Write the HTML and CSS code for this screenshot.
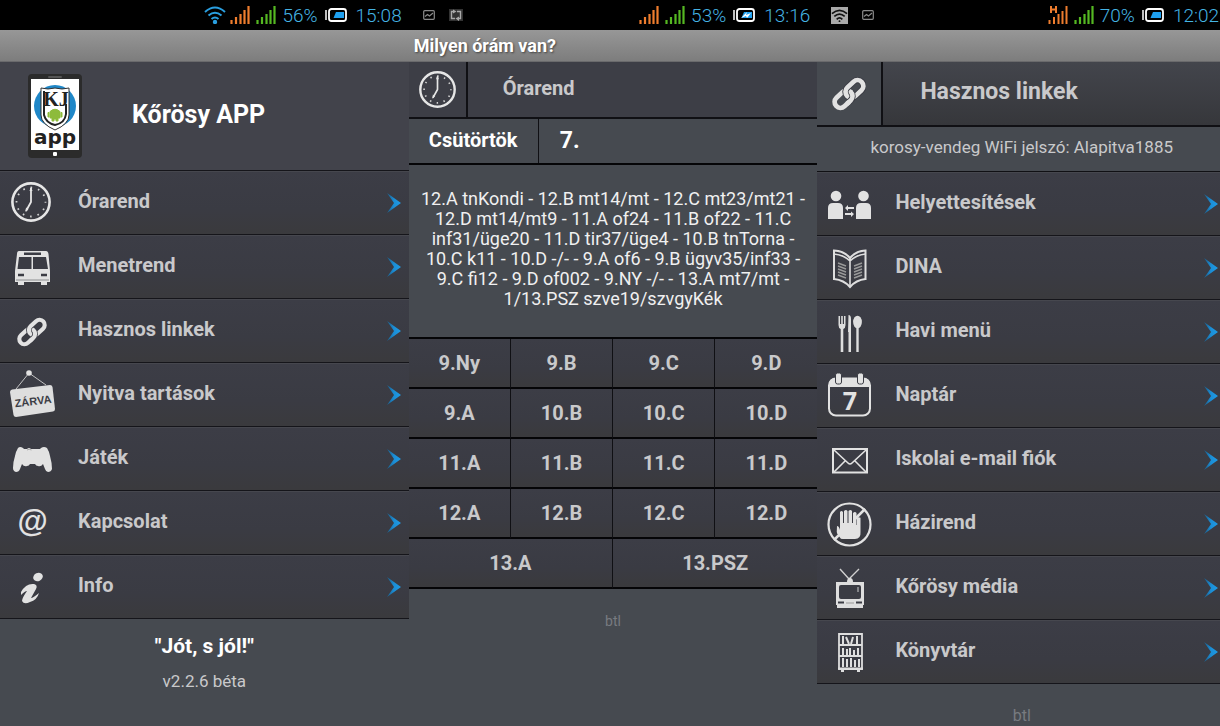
FILE: index.html
```html
<!DOCTYPE html>
<html lang="hu">
<head>
    <meta charset="UTF-8">
    <meta name="viewport" content="width=device-width, initial-scale=1.0">
    <title>Kőrösy APP</title>
    <link rel="stylesheet" href="styles.css">
</head>
<body>
<svg class="sprite" aria-hidden="true">
    <defs>
        <linearGradient id="blue" x1="0" x2="1" y1="0" y2="0">
            <stop offset="0" stop-color="#1c5c88"/>
            <stop offset="0.5" stop-color="#1b8ed6"/>
            <stop offset="1" stop-color="#1f9be6"/>
        </linearGradient>
    </defs>
    <symbol id="arrow" viewBox="0 0 14 20">
        <path d="M0 0L14 10L0 20L7 10Z" fill="url(#blue)"/>
    </symbol>
    <symbol id="signal" viewBox="0 0 20 18">
        <path d="M1.500 18V14M6 18V11M10.500 18V8M14.500 18V4M18.500 18V0" stroke="currentColor" stroke-width="2.200"/>
    </symbol>
    <symbol id="battery" viewBox="0 0 22 14">
        <path d="M1 2V12" stroke="#fff" stroke-width="1.500"/>
        <rect x="4" y="1" width="17" height="12" rx="2.500" fill="none" stroke="#fff" stroke-width="1.800"/>
        <path d="M11 4H19V10H8.500Z" fill="#1ea0f0"/>
    </symbol>
    <symbol id="picture" viewBox="0 0 12 10">
        <rect x="0.700" y="0.700" width="10.600" height="8.600" rx="1" fill="none" stroke="#8a8a8a" stroke-width="1.200"/>
        <path d="M2 6.500L4.500 4.500L6.500 6L10 3" fill="none" stroke="#8a8a8a" stroke-width="1.200"/>
    </symbol>
    <symbol id="clock" viewBox="0 0 40 40">
        <circle cx="20" cy="20" r="18.600" fill="none" stroke="#e6e6e6" stroke-width="2.600"/>
        <circle cx="20" cy="20" r="14.500" fill="none" stroke="#d4d4d4" stroke-width="1.800" stroke-dasharray="1.600 5.990" stroke-dashoffset="0.800"/>
        <path d="M20 6V20L15 29" fill="none" stroke="#e6e6e6" stroke-width="1.800" stroke-linejoin="round"/>
        <path d="M20 4.500L21.500 9H18.500ZM14.500 30L15 25.500L17.500 27Z" fill="#e6e6e6"/>
    </symbol>
    <symbol id="chain" viewBox="-16 -16 32 32">
        <g transform="rotate(-43)" fill="none">
            <rect x="-16.500" y="-5.500" width="19" height="11" rx="5.500" stroke="#e2e2e2" stroke-width="4.400"/>
            <rect x="-2.500" y="-5.500" width="19" height="11" rx="5.500" stroke="#3a3b43" stroke-width="6"/>
            <rect x="-2.500" y="-5.500" width="19" height="11" rx="5.500" stroke="#e2e2e2" stroke-width="4.400"/>
            <path d="M-5 5.500H-3A5.500 5.500 0 0 0 2.500 0" stroke="#3a3b43" stroke-width="6"/>
            <path d="M-8 5.500H-3A5.500 5.500 0 0 0 2.500 -0.500" stroke="#e2e2e2" stroke-width="4.400"/>
        </g>
    </symbol>
</svg>

<main class="screens">
    <!-- main menu -->
    <section class="screen">
        <div class="status-bar">
            <svg class="wifi" viewBox="0 0 22 18" fill="none" stroke="#2a9fe0" stroke-width="2">
                <path d="M1 6Q11 -3 21 6M4.500 9.500Q11 4 17.500 9.500M7.500 13Q11 10 14.500 13"/>
                <circle cx="11" cy="16" r="1.200" fill="#2a9fe0"/>
            </svg>
            <svg class="signal orange"><use href="#signal"/></svg>
            <svg class="signal green"><use href="#signal"/></svg>
            <span class="percent">56%</span>
            <svg class="battery"><use href="#battery"/></svg>
            <span class="time">15:08</span>
        </div>
        <div class="title-bar"></div>
        <header class="app-header">
            <svg class="logo" viewBox="0 0 54 84">
                <rect width="54" height="84" rx="4" fill="#2b2b2b"/>
                <rect x="20" y="2" width="14" height="2" rx="1" fill="#555"/>
                <rect x="3" y="5" width="48" height="71" fill="#fff"/>
                <circle cx="27" cy="32" r="21" fill="#1f87c8"/>
                <path d="M13 14Q20 16 27 14Q34 16 41 14V41Q41 50 27 56Q13 50 13 41Z" fill="#fff" stroke="#333" stroke-width="1"/>
                <path d="M38 30V40Q37 49 27 51Q18 49 16 41V17" fill="none" stroke="#222" stroke-width="2"/>
                <text x="28" y="32" class="logo-letters">KJ</text>
                <path d="M22 37.500Q27 33 32 37.500V44H30V47H28V45H26V47H24V44H22ZM20 38.500H21V43H20ZM33 38.500H34V43H33Z" fill="#8dbb3b" stroke="#8dbb3b"/>
                <text x="27" y="70" class="logo-app">app</text>
                <rect x="25" y="78" width="4" height="4" rx="1" fill="#fff"/>
            </svg>
            <h1>Kőrösy APP</h1>
        </header>
        <nav class="menu">
            <a href="#orarend">
                <svg class="icon" viewBox="0 0 64 64"><use href="#clock" x="11" y="11" width="40" height="40"/></svg>
                <span>Órarend</span>
                <svg class="arrow"><use href="#arrow"/></svg>
            </a>
            <a href="#menetrend">
                <svg class="icon" viewBox="0 0 64 64">
                    <path d="M19 16H46Q48 16 48.500 19L50 36V47H47V50H41V47H24V50H18V47H15V36L17 19Q17 16 19 16Z" fill="#e2e2e2"/>
                    <path d="M24 17.500H41V20H24ZM19 22H31.500V34H17.500ZM33 22H46L48 34H33Z" fill="#3b3c44"/>
                    <path d="M18 40H24M41 40H47" stroke="#3b3c44" stroke-width="2.500"/>
                    <path d="M16 45H49" stroke="#77787c" stroke-width="0.800"/>
                </svg>
                <span>Menetrend</span>
                <svg class="arrow"><use href="#arrow"/></svg>
            </a>
            <a href="#linkek">
                <svg class="icon" viewBox="0 0 64 64"><use href="#chain" x="17" y="18" width="30" height="30"/></svg>
                <span>Hasznos linkek</span>
                <svg class="arrow"><use href="#arrow"/></svg>
            </a>
            <a href="#nyitva">
                <svg class="icon" viewBox="0 0 64 64">
                    <path d="M16 26L29 10L46 22" fill="none" stroke="#c4c4c4"/>
                    <circle cx="29" cy="10" r="2.800" fill="#e2e2e2"/>
                    <path d="M12 26.500L50 22Q52 22 52.500 24L55 46Q55 48 53 48.500L16 54Q14 54 13.500 52L10 29Q10 27 12 26.500Z" fill="#dedede"/>
                    <text x="33" y="42" transform="rotate(-7 33 38)" class="sign-text">ZÁRVA</text>
                </svg>
                <span>Nyitva tartások</span>
                <svg class="arrow"><use href="#arrow"/></svg>
            </a>
            <a href="#jatek">
                <svg class="icon" viewBox="0 0 64 64">
                    <path d="M18 21Q20 19 23 21L24 22H27Q29 20 31 22H40L41 21Q44 19 47 21Q49 24 50 29Q52 36 52 42Q51 45 48 45Q46 45 45 42L43 37Q41 40 38 39Q36 39 35 37H30Q29 39 27 39Q24 40 22 37L20 42Q19 45 16 45Q13 44 13 41Q13 35 15 29Q16 24 18 21Z" fill="#e2e2e2"/>
                    <path d="M27 23Q29 21.500 31.500 23" fill="none" stroke="#999" stroke-width="0.800"/>
                </svg>
                <span>Játék</span>
                <svg class="arrow"><use href="#arrow"/></svg>
            </a>
            <a href="#kapcsolat">
                <svg class="icon" viewBox="0 0 64 64"><text x="32" y="41" class="at-sign">@</text></svg>
                <span>Kapcsolat</span>
                <svg class="arrow"><use href="#arrow"/></svg>
            </a>
            <a href="#info">
                <svg class="icon" viewBox="0 0 64 64" fill="#e2e2e2">
                    <ellipse cx="38" cy="22" rx="5" ry="4" transform="rotate(-25 38 22)"/>
                    <path d="M21 37Q26 28 34 29Q38 30 36 34L31 43Q33 43 39 38Q37 45 30 47Q24 50 22 46Q22 43 27 36Q25 36 21 40Z"/>
                </svg>
                <span>Info</span>
                <svg class="arrow"><use href="#arrow"/></svg>
            </a>
        </nav>
        <footer class="app-footer">
            <strong>"Jót, s jól!"</strong>
            <span>v2.2.6 béta</span>
        </footer>
    </section>

    <!-- timetable -->
    <section class="screen">
        <div class="status-bar">
            <div class="notifications">
                <svg class="picture"><use href="#picture"/></svg>
                <svg class="download" viewBox="0 0 14 13">
                    <rect x="0" y="0" width="14" height="12" fill="#333"/>
                    <path d="M4 2.500H2.500V9.500H6M8 2.500H11.500V9.500H10" fill="none" stroke="#aaa" stroke-width="1.400"/>
                    <path d="M4 0.500L7.500 2.500L4 4.500ZM10 7.500L6.500 9.500L10 12Z" fill="#aaa"/>
                </svg>
            </div>
            <svg class="signal orange"><use href="#signal"/></svg>
            <svg class="signal green"><use href="#signal"/></svg>
            <span class="percent">53%</span>
            <svg class="battery" viewBox="0 0 22 14">
                <use href="#battery"/>
                <path d="M8 10L14 4L13 7L18 5L14 10L13 8Z" fill="#fff"/>
            </svg>
            <span class="time">13:16</span>
        </div>
        <div class="title-bar">Milyen órám van?</div>
        <header class="page-header timetable-header">
            <div class="header-icon"><svg class="clock"><use href="#clock"/></svg></div>
            <h2>Órarend</h2>
        </header>
        <div class="day-row">
            <div class="day">Csütörtök</div>
            <div class="lesson">7.</div>
        </div>
        <p class="lessons">12.A tnKondi - 12.B mt14/mt - 12.C mt23/mt21 -<br>
            12.D mt14/mt9 - 11.A of24 - 11.B of22 - 11.C<br>
            inf31/üge20 - 11.D tir37/üge4 - 10.B tnTorna -<br>
            10.C k11 - 10.D -/- - 9.A of6 - 9.B ügyv35/inf33 -<br>
            9.C fi12 - 9.D of002 - 9.NY -/- - 13.A mt7/mt -<br>
            1/13.PSZ szve19/szvgyKék</p>
        <div class="classes">
            <button type="button">9.Ny</button>
            <button type="button">9.B</button>
            <button type="button">9.C</button>
            <button type="button">9.D</button>
            <button type="button">9.A</button>
            <button type="button">10.B</button>
            <button type="button">10.C</button>
            <button type="button">10.D</button>
            <button type="button">11.A</button>
            <button type="button">11.B</button>
            <button type="button">11.C</button>
            <button type="button">11.D</button>
            <button type="button">12.A</button>
            <button type="button">12.B</button>
            <button type="button">12.C</button>
            <button type="button">12.D</button>
            <button type="button" class="wide">13.A</button>
            <button type="button" class="wide">13.PSZ</button>
        </div>
        <footer class="credit">btl</footer>
    </section>

    <!-- useful links -->
    <section class="screen">
        <div class="status-bar">
            <div class="notifications">
                <svg class="wifi-box" viewBox="0 0 18 18" fill="none" stroke="#111" stroke-width="1.800">
                    <rect width="18" height="18" fill="#a9a9a9" stroke="none"/>
                    <path d="M1 7Q9 0 17 7M3.500 10Q9 5 14.500 10M6 13Q9 10 12 13"/>
                    <circle cx="9" cy="15" r="1" fill="#111" stroke="none"/>
                </svg>
                <svg class="picture"><use href="#picture"/></svg>
            </div>
            <svg class="signal orange" viewBox="0 0 20 18">
                <path d="M1.500 18V14M6 18V11M10.500 18V8M14.500 18V5M18.500 18V0M3 0V7M8 0V7M3 3.500H8" stroke="currentColor" stroke-width="2"/>
            </svg>
            <svg class="signal green"><use href="#signal"/></svg>
            <span class="percent">70%</span>
            <svg class="battery"><use href="#battery"/></svg>
            <span class="time">12:02</span>
        </div>
        <div class="title-bar"></div>
        <header class="page-header links-header">
            <div class="header-icon"><svg class="chain"><use href="#chain"/></svg></div>
            <h2>Hasznos linkek</h2>
        </header>
        <p class="wifi-note">korosy-vendeg WiFi jelszó: Alapitva1885</p>
        <nav class="menu">
            <a href="#helyettesites">
                <svg class="icon" viewBox="0 0 64 64" fill="#e2e2e2">
                    <circle cx="19" cy="24" r="5.300"/>
                    <path d="M11 47V36Q11 31 16 31H21Q26 31 26 36V47Z"/>
                    <circle cx="46.500" cy="24" r="5.300"/>
                    <path d="M39 47V36Q39 31 44 31H49Q54 31 54 36V47Z"/>
                    <path d="M28 36L31 33V35H37V37H31V39ZM37 42L34 39.500V41H28V43H34V45Z"/>
                </svg>
                <span>Helyettesítések</span>
                <svg class="arrow"><use href="#arrow"/></svg>
            </a>
            <a href="#dina">
                <svg class="icon" viewBox="0 0 64 64" fill="none" stroke="#dedede">
                    <path d="M17 14.500Q27 15 33 22Q39 15 48.500 14.500V43Q39 44 33 51Q27 44 17 43Z" stroke-width="2"/>
                    <path d="M17 18Q27 19 33 25Q39 19 48.500 18M33 22V50" stroke-width="1.600"/>
                    <path d="M21 27L29 30M21 30L29 33M21 33L29 36M21 36L29 39M21 39L29 42M45 27L37 30M45 30L37 33M45 33L37 36M45 36L37 39M45 39L37 42" stroke="#999" stroke-width="1.400"/>
                </svg>
                <span>DINA</span>
                <svg class="arrow"><use href="#arrow"/></svg>
            </a>
            <a href="#menu">
                <svg class="icon" viewBox="0 0 64 64" fill="#dedede">
                    <path d="M21.500 16H23V24H24.200V16H25.800V24H27V16H28.500V25Q28.500 28 26.300 29V52H23.700V29Q21.500 28 21.500 25Z"/>
                    <path d="M31.500 15Q34 15 34 19V52H31.500V32H31Z"/>
                    <ellipse cx="40.500" cy="22" rx="4.400" ry="6.300"/>
                    <path d="M39.300 27H41.700V52H39.300Z"/>
                </svg>
                <span>Havi menü</span>
                <svg class="arrow"><use href="#arrow"/></svg>
            </a>
            <a href="#naptar">
                <svg class="icon" viewBox="0 0 64 64">
                    <rect x="12" y="14.500" width="41" height="37" rx="7" fill="none" stroke="#e2e2e2" stroke-width="2"/>
                    <path d="M12 23V21Q12 14 19 14H46Q53 14 53 21V23Z" fill="#e2e2e2"/>
                    <rect x="18.500" y="9" width="6" height="11" rx="2" fill="#e2e2e2" stroke="#3b3c44"/>
                    <rect x="40.500" y="9" width="6" height="11" rx="2" fill="#e2e2e2" stroke="#3b3c44"/>
                    <text x="33" y="46" class="calendar-day">7</text>
                </svg>
                <span>Naptár</span>
                <svg class="arrow"><use href="#arrow"/></svg>
            </a>
            <a href="#email">
                <svg class="icon" viewBox="0 0 64 64" fill="none" stroke="#e2e2e2">
                    <rect x="16" y="21" width="34" height="23.500" stroke-width="2"/>
                    <path d="M17 22L31 35Q33 37 35 35L49 22M17 44L28 33M49 44L38 33" stroke-width="1.600"/>
                </svg>
                <span>Iskolai e-mail fiók</span>
                <svg class="arrow"><use href="#arrow"/></svg>
            </a>
            <a href="#hazirend">
                <svg class="icon" viewBox="0 0 64 64">
                    <path d="M21 46Q19 40 20 34Q22 34 23 38V20Q24.500 18 26 20V31H27V19Q29 17 30.500 19V31H31.500V19Q33.500 17 35 19V31H36V21Q38 19 39.500 21V33H40V23Q42 21 43.500 23V40Q44 47 38 47H26Q23 47 21 46Z" fill="#e2e2e2"/>
                    <path d="M41 19L47 19.500L45 26L40 25ZM19 40L24 47L18 47Z" fill="#3b3c44"/>
                    <path d="M48 17L38 27M23 42L17 48" stroke="#e2e2e2" stroke-width="2.500"/>
                    <circle cx="32.500" cy="32.500" r="21" fill="none" stroke="#e2e2e2" stroke-width="2.200"/>
                </svg>
                <span>Házirend</span>
                <svg class="arrow"><use href="#arrow"/></svg>
            </a>
            <a href="#media">
                <svg class="icon" viewBox="0 0 64 64">
                    <path d="M23 13L32 23L42 13" fill="none" stroke="#d0d0d0" stroke-width="1.400"/>
                    <path d="M30 26Q30 22 33 22Q36 22 36 26H47V49H46V52H20V49H19V26Z" fill="#dedede"/>
                    <rect x="22" y="29" width="22" height="14" rx="2" fill="#3b3c44"/>
                    <path d="M41 31V36" stroke="#ccc"/>
                    <path d="M21 46.500H27M39 46.500H45" stroke="#3b3c44" stroke-width="2"/>
                    <path d="M29 47H37" stroke="#999"/>
                </svg>
                <span>Kőrösy média</span>
                <svg class="arrow"><use href="#arrow"/></svg>
            </a>
            <a href="#konyvtar">
                <svg class="icon" viewBox="0 0 64 64" fill="none" stroke="#dedede">
                    <path d="M22 14H45V49H22ZM22 25H45M22 36H45M21 48.500H46" stroke-width="1.800"/>
                    <path d="M24 51H27M40 51H43" stroke-width="2"/>
                    <path d="M26 16V24M29 17L32 24M36 17L34 24M40 16V24M26 28V35M30 29V35M33 28V35M37 30V35M41 28V35M26 38V47M30 39V47M34 38V47M38 40V47M42 39V47" stroke-width="2"/>
                </svg>
                <span>Könyvtár</span>
                <svg class="arrow"><use href="#arrow"/></svg>
            </a>
        </nav>
        <footer class="credit links-credit">btl</footer>
    </section>
</main>
</body>
</html>
```

FILE: styles.css
```css
* {
    box-sizing: border-box;
}
body {
    margin: 0;
    font-family: Roboto, 'Liberation Sans', sans-serif;
    background-color: #464a50;
    color: #c9c9cb;
    overflow: hidden;
}
h1, h2, p {
    margin: 0;
}
/* display: none would also drop the gradient */
.sprite {
    display: block;
    width: 0;
    height: 0;
}
/* the third screen runs a little past the right edge */
.screens {
    display: grid;
    grid-template-columns: repeat(3, 33.5vw);
    min-height: 100vh;
}
.screen {
    display: flex;
    flex-direction: column;
    background-color: #464a50;
}

/* status bar */
.status-bar {
    display: flex;
    align-items: center;
    justify-content: flex-end;
    height: 30px;
    padding: 0 7px 0 14px;
    background-color: #000;
    color: #45b4e4;
    font-size: 19px;
    font-weight: 300;
}
.notifications {
    display: flex;
    align-items: center;
    gap: 14px;
    margin-right: auto;
}
.wifi {
    width: 22px;
    height: 18px;
    margin-right: 4px;
}
.wifi-box {
    width: 17px;
    height: 17px;
}
.picture {
    width: 12px;
    height: 10px;
}
.download {
    width: 14px;
    height: 13px;
}
.signal {
    width: 20px;
    height: 18px;
    margin-right: 6px;
}
.orange {
    color: #ee7d2e;
}
.green {
    color: #55b822;
}
.battery {
    width: 22px;
    height: 14px;
    margin: 0 9px 0 7px;
}

/* title bar */
.title-bar {
    height: 32px;
    padding-left: 5px;
    background: linear-gradient(#979797, #7d7d7d);
    border-bottom: 1px solid #6a6a6c;
    color: #fff;
    font-size: 18px;
    font-weight: bold;
    line-height: 32px;
    text-shadow: 1px 1px 2px #444;
}

/* headers */
.app-header {
    display: flex;
    align-items: center;
    gap: 50px;
    height: 109px;
    padding-left: 28px;
    background-color: #42434b;
    border-bottom: 1px solid #15151a;
}
.app-header h1 {
    padding-bottom: 2px;
    color: #fff;
    font-size: 25px;
    line-height: 32px;
}
.logo {
    width: 54px;
    height: 84px;
}
.logo-letters {
    font: bold 20px 'Liberation Serif', serif;
    fill: #222;
    text-anchor: middle;
}
.logo-app {
    font: bold 20px 'DejaVu Sans', sans-serif;
    fill: #222;
    text-anchor: middle;
}
.page-header {
    display: flex;
    border-bottom: 2px solid #101014;
    background-color: #3d3e46;
}
.page-header h2 {
    font-size: 20px;
}
.header-icon {
    display: flex;
    align-items: center;
    justify-content: center;
    border-right: 2px solid #101014;
}
.timetable-header {
    height: 57px;
}
.timetable-header .header-icon {
    width: 59px;
}
.timetable-header h2 {
    padding-left: 35px;
    line-height: 52px;
}
.clock {
    width: 37px;
    height: 37px;
}
.links-header {
    height: 65px;
}
.links-header .header-icon {
    width: 66px;
    background-color: #464a50;
}
.links-header h2 {
    flex: 1;
    padding-left: 37px;
    background: linear-gradient(#43454c, #36373b);
    font-size: 23px;
    line-height: 60px;
}
.chain {
    width: 34px;
    height: 34px;
}

/* menu list */
.menu a {
    display: flex;
    align-items: center;
    height: 64px;
    padding-right: 8px;
    background: linear-gradient(#3c3d46, #3a3b43 60%, #3a3a3d);
    border-top: 1px solid #46474e;
    border-bottom: 1px solid #15151a;
    color: #c9c9cb;
    font-size: 20px;
    font-weight: bold;
    text-decoration: none;
}
.menu span {
    flex: 1;
    padding: 0 0 4px 14px;
}
.icon {
    width: 64px;
    height: 64px;
}
.arrow {
    width: 14px;
    height: 20px;
}
.sign-text {
    font: bold 11px 'Liberation Sans', sans-serif;
    fill: #3b3c44;
    text-anchor: middle;
}
.at-sign {
    font: italic bold 31px 'Liberation Sans', sans-serif;
    fill: #e2e2e2;
    text-anchor: middle;
}
.calendar-day {
    font: bold 25px 'Open Sans', sans-serif;
    fill: #e2e2e2;
    text-anchor: middle;
}
.app-footer {
    display: flex;
    flex-direction: column;
    align-items: center;
    gap: 11px;
    padding-top: 15px;
    font-size: 17px;
    line-height: 24px;
}
.app-footer strong {
    color: #fff;
    font-size: 21px;
}

/* timetable */
.day-row {
    display: flex;
    height: 46px;
    border-bottom: 2px solid #050507;
    color: #fff;
    font-size: 20px;
    font-weight: bold;
    line-height: 43px;
}
.day {
    width: 130px;
    border-right: 1px solid #101014;
    text-align: center;
}
.lesson {
    padding-left: 21px;
    font-size: 23px;
}
.lessons {
    padding: 24px 0 28px;
    color: #f0f0f0;
    font-size: 18px;
    line-height: 20px;
    text-align: center;
    white-space: nowrap;
}
.classes {
    display: grid;
    grid-template-columns: repeat(4, 1fr);
    border-top: 2px solid #050507;
}
.classes button {
    height: 50px;
    padding: 0 0 1px;
    border: none;
    border-right: 1px solid #101014;
    border-bottom: 2px solid #050507;
    background: linear-gradient(#3c3d46, #3a3b43 60%, #3a3a3d);
    color: #c9c9cb;
    font-family: inherit;
    font-size: 20px;
    font-weight: bold;
}
.classes button:nth-child(4n), .classes button:last-child {
    border-right: none;
}
.classes .wide {
    grid-column: span 2;
}
.credit {
    padding-top: 22px;
    color: #787b80;
    font-size: 14px;
    line-height: 20px;
    text-align: center;
}

/* useful links */
.wifi-note {
    height: 45px;
    border-bottom: 1px solid #101014;
    font-size: 17px;
    line-height: 40px;
    text-align: center;
}
.links-credit {
    font-size: 16px;
}
```
